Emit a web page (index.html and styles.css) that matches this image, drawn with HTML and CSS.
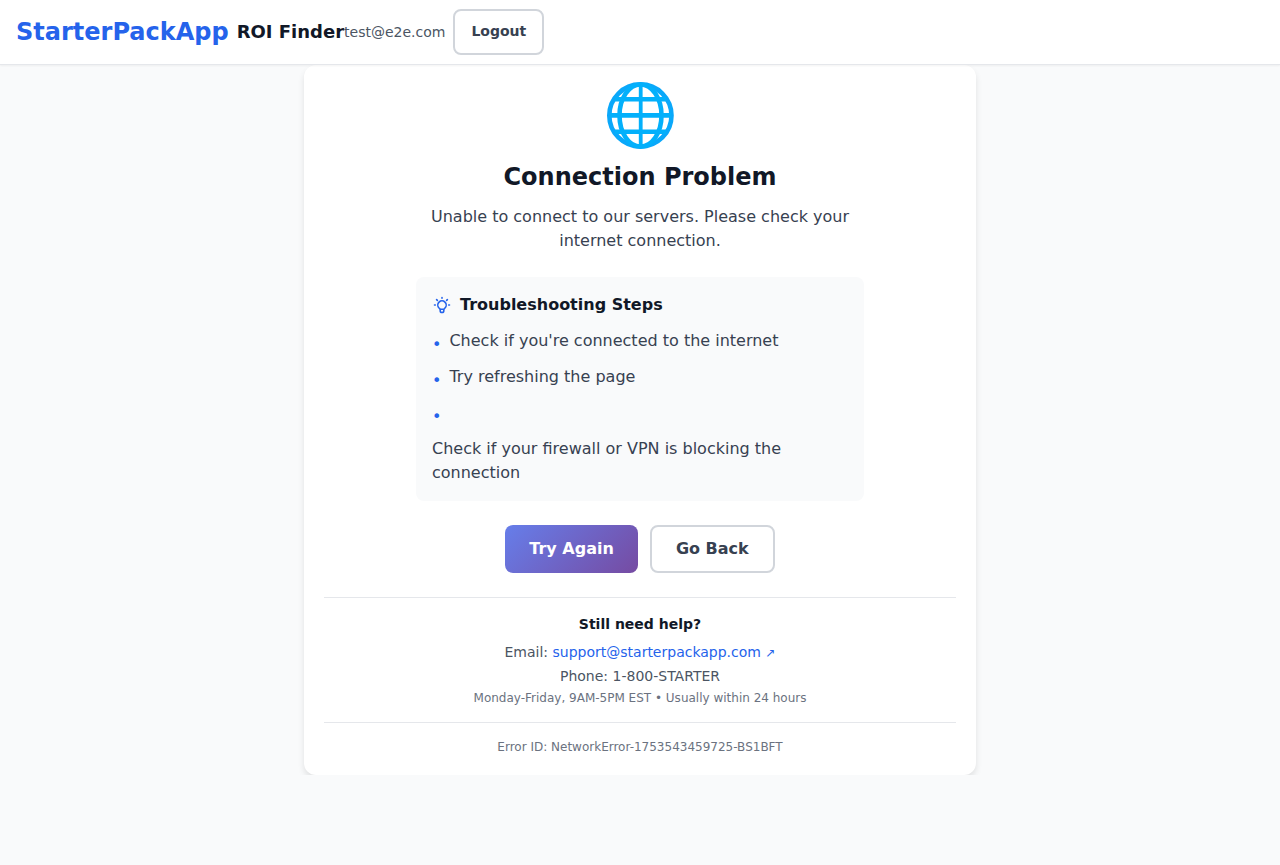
FILE: index.html
```
<!DOCTYPE html>
<html lang="en">
<head>
  <meta charset="utf-8">
  <meta name="viewport" content="width=device-width, initial-scale=1">
  <title>ROI Finder</title>
  <link rel="stylesheet" href="styles.css">
</head>
<body>
  <header class="topbar">
    <span class="brand">StarterPackApp</span>
    <h1 class="product">ROI Finder</h1>
    <div class="account">
      <span class="account-email">test@e2e.com</span>
      <button class="btn btn-outline btn-small" type="button">Logout</button>
    </div>
  </header>

  <main class="content">
    <section class="card">
      <svg class="globe" viewBox="0 0 68 68" fill="none" stroke="#03b0fb" stroke-width="4.6" aria-hidden="true">
        <circle cx="34.400" cy="34.500" r="31.100" stroke="#0aa8fa"/>
        <ellipse cx="34.500" cy="34.500" rx="21" ry="31"/>
        <path d="M34.700 4v61" stroke-width="3.800"/>
        <path d="M4 34.400h61M9 18.300h51M9 50.700h51"/>
      </svg>
      <h2 class="title">Connection Problem</h2>
      <p class="message">Unable to connect to our servers. Please check your internet connection.</p>

      <div class="steps">
        <h3 class="steps-title">
          <svg class="bulb" viewBox="0 0 20 20" fill="none" stroke="currentColor" stroke-width="1.6" stroke-linecap="round" stroke-linejoin="round" aria-hidden="true">
            <path d="M10 2.500v.8M4.600 4.600l.8.8M15.400 4.600l-.8.8M2.500 10h.8M16.700 10h.8"/>
            <path d="M7 13a4.200 4.200 0 1 1 6 0l-.5.500a2.300 2.300 0 0 0-.7 1.600v.6a1.800 1.800 0 0 1-3.600 0V15a2.300 2.300 0 0 0-.7-1.600zM8 14.200h4"/>
          </svg>
          Troubleshooting Steps
        </h3>
        <ul class="steps-list">
          <li class="step"><span class="bullet">•</span><span>Check if you're connected to the internet</span></li>
          <li class="step"><span class="bullet">•</span><span>Try refreshing the page</span></li>
          <li class="step"><span class="bullet">•</span><span>Check if your firewall or VPN is blocking the connection</span></li>
        </ul>
      </div>

      <div class="actions">
        <button class="btn btn-primary" type="button">Try Again</button>
        <button class="btn btn-outline" type="button">Go Back</button>
      </div>

      <div class="help">
        <h3 class="help-title">Still need help?</h3>
        <p class="help-line">Email: <a class="link" href="mailto:support@starterpackapp.com">support@starterpackapp.com <span class="arrow">↗</span></a></p>
        <p class="help-line">Phone: 1-800-STARTER</p>
        <p class="small">Monday-Friday, 9AM-5PM EST • Usually within 24 hours</p>
      </div>

      <div class="error-id">
        <p class="small">Error ID: NetworkError-1753543459725-BS1BFT</p>
      </div>
    </section>
  </main>
</body>
</html>
```
FILE: styles.css
```
* {
  box-sizing: border-box;
}

body,
h1,
h2,
h3,
p,
ul {
  margin: 0;
  padding: 0;
}

body {
  background: #f9fafb;
  color: #374151;
  font-family: "DejaVu Sans", sans-serif;
  font-size: 16px;
  line-height: 24px;
}

.topbar {
  position: relative;
  display: flex;
  align-items: center;
  min-height: 65px;
  padding: 8px 16px;
  background: #fff;
  border-bottom: 1px solid #e5e7eb;
  box-shadow: 0 1px 2px rgba(0, 0, 0, 0.05);
}

.brand {
  margin-right: 8px;
  color: #2563eb;
  font-size: 24px;
  font-weight: 700;
  line-height: 32px;
}

.product {
  color: #111827;
  font-size: 18px;
  line-height: 28px;
}

.account {
  display: flex;
  align-items: center;
  gap: 8px;
}

.account-email {
  color: #4b5563;
  font-size: 14px;
  line-height: 20px;
}

.btn {
  min-height: 48px;
  padding: 10px 24px;
  border: 0;
  border-radius: 8px;
  font-family: inherit;
  font-size: 16px;
  font-weight: 700;
  line-height: 24px;
  cursor: pointer;
}

.btn-primary {
  background: linear-gradient(135deg, #667eea 0%, #764ba2 100%);
  color: #fff;
}

.btn-outline {
  background: #fff;
  border: 2px solid #d1d5db;
  color: #374151;
}

.btn-small {
  min-height: 46px;
  padding: 10px 16px 12px;
  font-size: 14px;
  line-height: 20px;
}

.content {
  overflow: hidden;
}

.card {
  display: flex;
  flex-direction: column;
  align-items: center;
  max-width: 672px;
  margin: 0 auto;
  padding: 16px 20px 20px;
  background: #fff;
  border-radius: 12px;
  box-shadow: 0 4px 6px rgba(0, 0, 0, 0.1);
  text-align: center;
}

.globe {
  width: 68px;
  height: 68px;
}

.title {
  margin: 12px 0;
  color: #111827;
  font-size: 24px;
  line-height: 32px;
}

.message {
  max-width: 448px;
  margin-bottom: 24px;
}

.steps {
  width: 100%;
  max-width: 448px;
  padding: 16px;
  background: #f9fafb;
  border-radius: 8px;
  text-align: left;
}

.steps-title {
  display: flex;
  align-items: center;
  gap: 8px;
  margin-bottom: 12px;
  color: #111827;
  font-size: 16px;
}

.bulb {
  width: 20px;
  height: 20px;
  color: #2563eb;
}

.steps-list {
  display: flex;
  flex-direction: column;
  gap: 12px;
  list-style: none;
}

.step {
  display: flex;
  flex-wrap: wrap;
  gap: 12px 8px;
}

.bullet {
  height: 24px;
  padding-top: 4px;
  color: #2563eb;
}

.actions {
  display: flex;
  gap: 12px;
  margin: 24px 0;
}

.help,
.error-id {
  width: 100%;
  padding-top: 16px;
  border-top: 1px solid #e5e7eb;
}

.help {
  padding-bottom: 16px;
}

.help-title {
  margin-bottom: 8px;
  color: #111827;
  font-size: 14px;
  line-height: 20px;
}

.help-line {
  margin-bottom: 4px;
  color: #4b5563;
  font-size: 14px;
  line-height: 20px;
}

.link {
  color: #2563eb;
  text-decoration: none;
}

.arrow {
  font-size: 12px;
  line-height: 1;
}

.small {
  color: #6b7280;
  font-size: 12px;
  line-height: 16px;
}
```
